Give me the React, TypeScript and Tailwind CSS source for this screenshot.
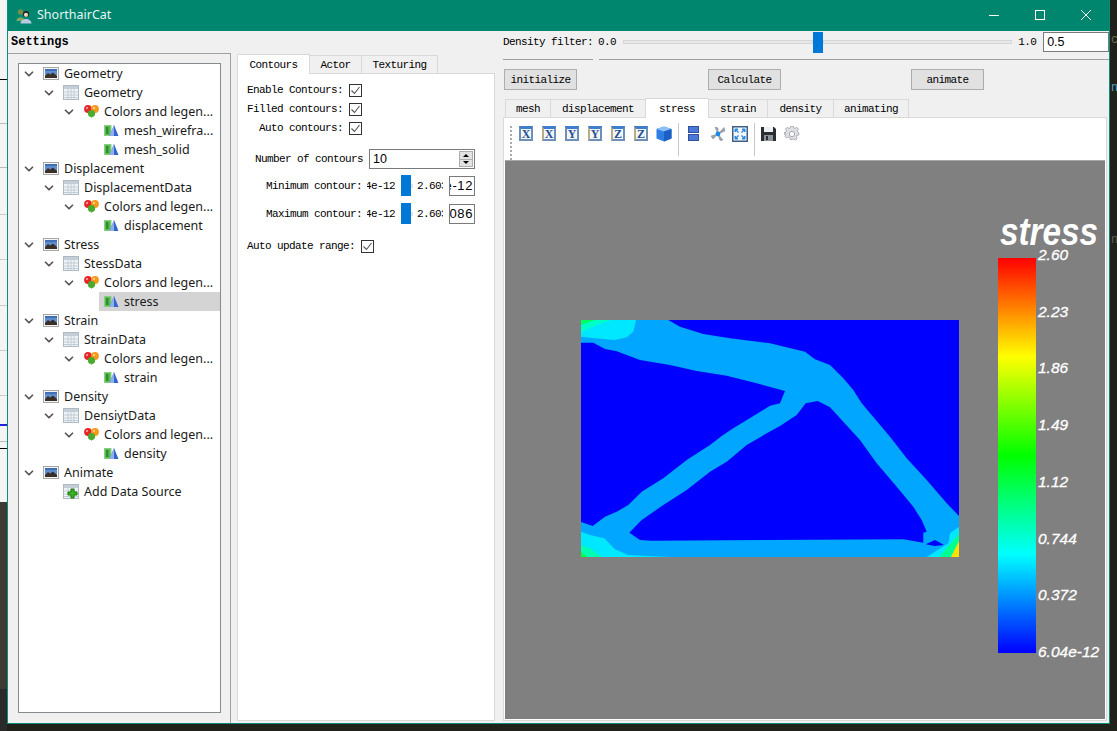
import { ReactNode } from "react";
import { ChevronDown } from "lucide-react";

const mono = "font-['Liberation_Mono',monospace] text-[11px] tracking-[-0.6px] text-black whitespace-pre";
const sans = "font-['Noto_Sans',sans-serif] text-[12.5px] text-[#1a1a1a] whitespace-pre";

const ImageIcon = () => (
  <svg width="16" height="13" viewBox="0 0 16 13">
    <rect x="0.5" y="0.5" width="15" height="12" fill="#f4f4f4" stroke="#a8a8a8" />
    <rect x="2" y="2" width="12" height="9" fill="#5f8fd0" />
    <path d="M2 9 L5 6 L7 7.5 L10 5.5 L14 9 V11 H2 Z" fill="#3a3028" />
    <rect x="2" y="2" width="12" height="2" fill="#3f6fb5" />
  </svg>
);

const TableIcon = ({ plus }: { plus?: boolean }) => (
  <svg width="16" height="15" viewBox="0 0 16 15">
    <rect x="0.5" y="0.5" width="15" height="14" fill="#f2f5f8" stroke="#aeb9c4" />
    <rect x="1" y="1" width="14" height="3" fill="#c3ced9" />
    <path d="M1 7h14M1 10h14M1 12.5h14M5 4v10M8 4v10M11 4v10" stroke="#c2ccd6" strokeWidth="1" />
    {plus && <path d="M8 5h3v3h3v3h-3v3H8v-3H5V8h3Z" fill="#37b41e" stroke="#1d7a0e" strokeWidth="1" />}
  </svg>
);

const ColorsIcon = () => (
  <svg width="15" height="13" viewBox="0 0 15 13">
    <path d="M3.5 6 L7.5 13 L11.5 6 Z" fill="#4bab2e" />
    <circle cx="4" cy="4" r="3.9" fill="#e3272b" />
    <circle cx="11" cy="4" r="3.9" fill="#f39a1c" />
    <circle cx="7.5" cy="8.5" r="3.6" fill="#4bab2e" />
    <circle cx="3" cy="3" r="1" fill="#ffb0b0" />
    <circle cx="10" cy="3" r="1" fill="#ffe0a0" />
  </svg>
);

const MeshIcon = () => (
  <svg width="15" height="13" viewBox="0 0 15 13">
    <rect x="0.5" y="1.5" width="6.5" height="10" fill="#5dbb57" stroke="#86d080" />
    <rect x="2" y="3" width="2.5" height="7" fill="#2c8f32" />
    <path d="M10 1 L14.5 12 H5.5 Z" fill="#3565cc" />
    <path d="M10 1 L10 12 H5.5 Z" fill="#8fb0ee" />
  </svg>
);

type Row = { level: number; label: string; icon: ReactNode; open?: boolean; selected?: boolean };

const section = (title: string, data: string, leaves: string[], selected?: string): Row[] => [
  { level: 0, label: title, icon: <ImageIcon />, open: true },
  { level: 1, label: data, icon: <TableIcon />, open: true },
  { level: 2, label: "Colors and legen...", icon: <ColorsIcon />, open: true },
  ...leaves.map((l) => ({ level: 3, label: l, icon: <MeshIcon />, selected: l === selected })),
];

const treeRows: Row[] = [
  ...section("Geometry", "Geometry", ["mesh_wirefra...", "mesh_solid"]),
  ...section("Displacement", "DisplacementData", ["displacement"]),
  ...section("Stress", "StessData", ["stress"], "stress"),
  ...section("Strain", "StrainData", ["strain"]),
  ...section("Density", "DensiytData", ["density"]),
  { level: 0, label: "Animate", icon: <ImageIcon />, open: true },
  { level: 1, label: "Add Data Source", icon: <TableIcon plus /> },
];

const TreeRow = ({ row }: { row: Row }) => (
  <div className="flex h-[19px] items-center" style={{ paddingLeft: row.level * 20 }}>
    <div className="flex w-5 shrink-0 justify-center">
      {row.open && <ChevronDown size={14} strokeWidth={3} className="text-[#555]" />}
    </div>
    <div className={`flex h-full flex-1 items-center pl-1 ${row.selected ? "bg-[#d4d4d4]" : ""}`}>
      <div className="flex w-[16px] shrink-0 justify-center">{row.icon}</div>
      <span className={`ml-[5px] pt-[2px] ${sans}`}>{row.label}</span>
    </div>
  </div>
);

const CheckBox = () => (
  <div className="flex h-[13px] w-[13px] shrink-0 items-center justify-center border border-[#333] bg-white">
    <svg width="11" height="11" viewBox="0 0 11 11">
      <path d="M1.5 5.5 L4.5 8.5 L9.5 2" fill="none" stroke="#555" strokeWidth="1.1" />
    </svg>
  </div>
);

const CheckRow = ({ label, width }: { label: string; width: string }) => (
  <div className="flex h-[19px] items-center">
    <div className={`${width} text-right ${mono}`}>{label}</div>
    <div className="ml-[6px]">
      <CheckBox />
    </div>
  </div>
);

const RangeRow = ({ label, value, className }: { label: string; value: string; className: string }) => (
  <div className={`flex h-[20px] items-center ${className}`}>
    <div className={`w-[124px] pt-px text-right ${mono}`}>{label}</div>
    <div className={`ml-[5px] flex w-[28px] justify-end overflow-hidden pt-px ${mono}`}>6.04e-12</div>
    <div className="ml-[6px] -mt-px h-[21px] w-[10px] shrink-0 bg-[#0078d7]" />
    <div className="h-[4px] w-[2px] shrink-0 bg-[#e2e2e2]" />
    <div className={`ml-[4px] w-[26px] overflow-hidden pt-px ${mono}`}>2.60386</div>
    <div className="ml-[6px] flex h-[20px] w-[26px] items-center justify-end overflow-hidden whitespace-nowrap border border-[#7a7a7a] bg-white px-[1px]">
      <span className="font-['Liberation_Sans',sans-serif] text-[13px] tracking-[0.6px] text-black">{value}</span>
    </div>
  </div>
);

const Tab = ({ label, width, active }: { label: string; width: string; active?: boolean }) => (
  <div
    className={`flex items-center justify-center border border-b-0 border-[#d9d9d9] pt-px ${width} ${mono} ${
      active ? "z-10 -mb-px h-[20px] bg-white" : "mt-[2px] h-[18px] bg-[#f0f0f0]"
    }`}
  >
    {label}
  </div>
);

const PushButton = ({ label, className }: { label: string; className: string }) => (
  <div className={`flex h-[21px] w-[73px] items-center justify-center border border-[#adadad] bg-[#e1e1e1] pt-px ${mono} ${className}`}>
    {label}
  </div>
);

const ViewIcon = ({ letter, tan }: { letter: string; tan?: boolean }) => (
  <div
    className={`flex h-[15px] w-[14px] shrink-0 items-center justify-center border-2 border-t-[3px] border-[#6f8fb8] border-t-[#3d7fcc] bg-[#f3f6fa] font-['Liberation_Serif',serif] text-[12px] font-bold leading-none text-[#25528f] ${
      tan ? "border-l-[#b9ab86]" : ""
    }`}
  >
    {letter}
  </div>
);

const CubeIcon = () => (
  <svg width="16" height="16" viewBox="0 0 16 16">
    <path d="M8 0.5 L15.5 3 V12.5 L8 15.5 L0.5 12.5 V3 Z" fill="#2d7fe6" />
    <path d="M8 0.5 L15.5 3 L8 5.5 L0.5 3 Z" fill="#8cc0f7" />
    <path d="M8 5.5 V15.5 L15.5 12.5 V3 Z" fill="#1d60c4" />
  </svg>
);

const SplitIcon = () => (
  <svg width="11" height="15" viewBox="0 0 11 15">
    <rect x="0.5" y="0.5" width="10" height="6" fill="#4b78d8" stroke="#2f4f99" />
    <rect x="0.5" y="8.5" width="10" height="6" fill="#4b78d8" stroke="#2f4f99" />
  </svg>
);

const AxesIcon = () => (
  <svg width="16" height="16" viewBox="0 0 16 16">
    <path d="M8 8 L14 1.5 L15 5 Z M8 8 L1 10 L3 13 Z M8 8 L13 14 L10 14.5 Z M8 8 L5 1 L8 2 Z" fill="#9aa3ad" stroke="#7c858f" strokeWidth="0.5" />
    <circle cx="8" cy="8" r="2.4" fill="#1e88e5" />
  </svg>
);

const FitIcon = () => (
  <svg width="16" height="16" viewBox="0 0 16 16">
    <rect x="0.75" y="0.75" width="14.5" height="14.5" fill="#f3f6fa" stroke="#3e5f86" strokeWidth="1.5" />
    <path d="M3 3 L6 3 L3 6 Z M13 3 L10 3 L13 6 Z M3 13 L6 13 L3 10 Z M13 13 L10 13 L13 10 Z" fill="#2b8ae0" stroke="#2b8ae0" />
    <path d="M4 4 L6.5 6.5 M12 4 L9.5 6.5 M4 12 L6.5 9.5 M12 12 L9.5 9.5" stroke="#2b8ae0" strokeWidth="1.4" />
  </svg>
);

const SaveIcon = () => (
  <svg width="15" height="15" viewBox="0 0 15 15">
    <path d="M0 1 H13 L15 3 V15 H0 Z" fill="#2a2d33" />
    <rect x="3" y="1" width="9" height="5" fill="#eef1f4" />
    <rect x="3" y="9" width="9" height="6" fill="#8e949c" />
    <rect x="5" y="10" width="2" height="4" fill="#2a2d33" />
  </svg>
);

const GearIcon = () => (
  <svg width="16" height="16" viewBox="0 0 24 24">
    <path
      d="M10 1h4l.7 3.2 2.2.9 2.8-1.8 2.8 2.8-1.8 2.8.9 2.2L23 11.8v4l-3.4.7-.9 2.1 1.8 2.8-2.8 2.6-2.8-1.8-2.2.9-.7 0H9l-.7-3.2-2.2-.9-2.8 1.8-2.8-2.8 1.8-2.8-.9-2.2L-1 15.8v-4l3.2-.7.9-2.2-1.8-2.8 2.8-2.8 2.8 1.8 2.2-.9Z"
      transform="translate(1 -1) scale(0.92)"
      fill="#dfe1e4"
      stroke="#a5a8ad"
      strokeWidth="1.5"
    />
    <circle cx="12" cy="12" r="4" fill="#fff" stroke="#a5a8ad" strokeWidth="1.5" />
  </svg>
);

const StressMesh = () => (
  <svg width="378" height="237" viewBox="0 0 378 237" className="block">
    <rect width="378" height="237" fill="#00a6ff" />
    <g fill="#0000ff">
      <polygon points="0,22.7 12.3,22.7 24,29 35.7,31.3 59,40 89,45 115.7,51 145.7,55.7 175.7,63.3 204,71 199,83.3 189,85.7 174,95 152.3,108.3 140.7,116 129,125 105.7,140 82.3,158.3 60.7,171.7 47.3,185 35.7,191.7 24,196.7 11.7,206 0,202" />
      <polygon points="87.3,0 99,6.7 122.3,14 149,18.3 189,23.3 224,31.7 234,39.3 249,45 262.3,58.3 272.3,70 280.7,83.3 309,116.7 325.7,138.3 345.7,160 365.7,183.3 378,196 378,0" />
      <polygon points="48.3,212.7 59,220 70.7,220.7 322.3,219.3 342.3,222.7 342.3,212.7 345.7,211.7 340.7,200 332.3,186.7 315.7,166.7 295.7,143.3 279,120 249,87.3 236.7,81 224.7,83.3 215.7,95 199,106 185.7,113.3 165.7,125 145.7,141.7 129,151.7 105.7,170 82.3,185 60.7,200" />
      <polygon points="344.7,224.3 354,220 363,225 354,226" />
    </g>
    <polygon points="0,0 55,0 52.3,11.7 45.7,17.3 34,20 14,18.3 0,16.7" fill="#00e8ff" />
    <polygon points="0,0 30,0 14,6 0,12" fill="#00ffc8" />
    <polygon points="0,0 14,0 0,5" fill="#00ff60" />
    <polygon points="0,211.7 9,215 23.3,218.3 34,229.3 47.3,235 89,237 0,237" fill="#00e8ff" />
    <polygon points="0,225 9,228.3 20.7,237 0,237" fill="#00ffb0" />
    <polygon points="0,231.7 5.7,237 0,237" fill="#00ff40" />
    <polygon points="378,206.7 369,213.3 367.3,223.3 345.7,237 378,237" fill="#00e8ff" />
    <polygon points="378,214 358,237 378,237" fill="#00ff90" />
    <polygon points="378,221 370,237 378,237" fill="#ffe000" />
  </svg>
);

const legend = ["2.60", "2.23", "1.86", "1.49", "1.12", "0.744", "0.372", "6.04e-12"];

const WindowButtons = () => (
  <div className="flex items-center text-white">
    <svg width="46" height="31" viewBox="0 0 46 31">
      <path d="M18 15.5 H28" stroke="#fff" />
    </svg>
    <svg width="46" height="31" viewBox="0 0 46 31">
      <rect x="18.5" y="10.5" width="9" height="9" fill="none" stroke="#fff" />
    </svg>
    <svg width="46" height="31" viewBox="0 0 46 31">
      <path d="M18 10 L28 20 M28 10 L18 20" stroke="#fff" />
    </svg>
  </div>
);

export default function App() {
  return (
    <div className="flex h-[731px] w-[1117px] overflow-hidden bg-[#21211c]">
      {/* whatever is behind the window on the left */}
      <div className="flex h-full w-[7px] shrink-0 flex-col bg-[#f4f4f4]">
        <div className="h-[80px] border-b border-black" />
        <div className="h-[44px] border-b border-[#bbb]" />
        <div className="h-[44px] border-b border-[#bbb]" />
        <div className="h-[47px] border-b border-[#ccc]" />
        <div className="h-[45px] border-b border-[#ccc]" />
        <div className="h-[46px] border-b border-[#ccc]" />
        <div className="h-[45px] border-b border-[#ccc]" />
        <div className="h-[45px] border-b border-[#ccc]" />
        <div className="h-[30px] border-b-2 border-[#2222dd]" />
        <div className="h-[16px] border-b border-[#bbb]" />
        <div className="h-[7px] border-b border-black" />
        <div className="h-[53px]" />
        <div className="h-[187px] bg-[#3e3b34]" />
        <div className="flex-1 bg-[#2a2a2a]" />
      </div>

      <div className="flex h-[724px] w-[1103px] shrink-0 flex-col border-x border-b border-[#0e8c7a] bg-[#f0f0f0]">
        <div className="flex h-[31px] shrink-0 items-center justify-between bg-[#00856f]">
          <div className="flex items-center">
            <svg width="16" height="16" viewBox="0 0 16 16" className="ml-[8px]">
              <circle cx="4.5" cy="4" r="2.8" fill="#6f8f4a" />
              <path d="M0.5 13 C0.5 8 8.5 8 8.5 13 Z" fill="#80a860" />
              <circle cx="10" cy="6" r="3" fill="#20201e" />
              <circle cx="10" cy="6.8" r="2.1" fill="#f3d8bd" />
              <path d="M4.5 15.5 C4.5 9.5 15.5 9.5 15.5 15.5 Z" fill="#b9c9de" />
            </svg>
            <span className="ml-[5px] font-['Noto_Sans',sans-serif] text-[12.5px] text-[#e6f5f1]">ShorthairCat</span>
          </div>
          <WindowButtons />
        </div>

        <div className="flex min-h-0 flex-1">
          {/* settings tree */}
          <div className="flex w-[223px] shrink-0 flex-col">
            <div className="flex h-[22px] shrink-0 items-center pl-[3px] font-['Liberation_Mono',monospace] text-[12px] font-bold text-black">
              Settings
            </div>
            <div className="flex min-h-0 flex-1 border-r border-t border-[#a0a0a0] pb-[10px] pl-[10px] pr-[9px] pt-[9px]">
              <div className="w-full border border-[#868a91] bg-white">
                {treeRows.map((row, i) => (
                  <TreeRow key={i} row={row} />
                ))}
              </div>
            </div>
          </div>

          {/* contours panel */}
          <div className="ml-[6px] flex w-[258px] shrink-0 flex-col pb-[2px] pt-[22px]">
            <div className="flex shrink-0 items-end">
              <Tab label="Contours" width="w-[73px]" active />
              <Tab label="Actor" width="w-[53px] -ml-px" />
              <Tab label="Texturing" width="w-[77px] -ml-px" />
            </div>
            <div className="flex-1 border border-[#d9d9d9] bg-white pt-[7px]">
              <CheckRow label="Enable Contours:" width="w-[105px]" />
              <CheckRow label="Filled contours:" width="w-[105px]" />
              <CheckRow label="Auto contours:" width="w-[105px]" />
              <div className="mt-[11px] flex h-[20px] items-center">
                <div className={`w-[125px] text-right ${mono}`}>Number of contours</div>
                <div className="ml-[6px] flex h-[20px] w-[106px] items-center justify-between border border-[#7a7a7a] bg-white pl-[3px] pr-[1px]">
                  <span className="font-['Liberation_Sans',sans-serif] text-[12.5px] text-black">10</span>
                  <div className="flex h-[16px] w-[14px] flex-col border border-[#adadad] bg-[#e1e1e1]">
                    <div className="flex flex-1 items-center justify-center border-b border-[#adadad] text-[0px]">
                      <div className="h-0 w-0 border-x-[3px] border-b-[3px] border-x-transparent border-b-black" />
                    </div>
                    <div className="flex flex-1 items-center justify-center">
                      <div className="h-0 w-0 border-x-[3px] border-t-[3px] border-x-transparent border-t-black" />
                    </div>
                  </div>
                </div>
              </div>
              <RangeRow label="Minimum contour:" value="6.04e-12" className="mt-[7px]" />
              <RangeRow label="Maximum contour:" value="2.60386086" className="mt-[8px]" />
              <div className="mt-[13px]">
                <CheckRow label="Auto update range:" width="w-[117px]" />
              </div>
            </div>
          </div>

          {/* main area */}
          <div className="ml-[8px] flex w-[606px] shrink-0 flex-col">
            <div className="flex h-[28px] shrink-0 items-center pb-[6px]">
              <span className={mono}>Density filter:</span>
              <span className={`ml-[5px] ${mono}`}>0.0</span>
              <div className="ml-[7px] flex w-[390px] items-center">
                <div className="h-[4px] w-[190px] border border-[#d6d6d6] bg-[#e8e8e8]" />
                <div className="h-[21px] w-[10px] shrink-0 bg-[#0078d7]" />
                <div className="h-[4px] flex-1 border border-[#d6d6d6] bg-[#e8e8e8]" />
              </div>
              <span className={`ml-[6px] ${mono}`}>1.0</span>
              <div className="ml-[7px] flex h-[20px] w-[66px] items-center border border-[#7a7a7a] bg-white pl-[3px]">
                <span className="font-['Liberation_Sans',sans-serif] text-[12.5px] text-black">0.5</span>
              </div>
            </div>
            <div className="flex h-[2px] shrink-0 gap-[6px]">
              <div className="h-px w-[90px] bg-[#a0a0a0]" />
              <div className="h-px flex-1 bg-[#a0a0a0]" />
            </div>
            <div className="mt-[8px] flex shrink-0 pl-px">
              <PushButton label="initialize" className="" />
              <PushButton label="Calculate" className="ml-[131px]" />
              <PushButton label="animate" className="ml-[130px]" />
            </div>
            <div className="mt-[7px] flex shrink-0 items-end pl-[2px]">
              <Tab label="mesh" width="w-[46px]" />
              <Tab label="displacement" width="w-[96px] -ml-px" />
              <Tab label="stress" width="w-[64px] -ml-px" active />
              <Tab label="strain" width="w-[60px] -ml-px" />
              <Tab label="density" width="w-[67px] -ml-px" />
              <Tab label="animating" width="w-[76px] -ml-px" />
            </div>
            <div className="mb-[2px] flex min-h-0 w-[604px] flex-1 flex-col border border-[#d9d9d9] bg-white px-px pb-px">
              <div className="flex h-[42px] shrink-0 items-start pt-[8px]">
                <div className="ml-[5px] h-[34px] w-[2px] border-l-2 border-dotted border-[#aaa]" />
                <div className="ml-[7px] flex items-center gap-[9px]">
                  <ViewIcon letter="X" />
                  <ViewIcon letter="X" tan />
                  <ViewIcon letter="Y" />
                  <ViewIcon letter="Y" tan />
                  <ViewIcon letter="Z" tan />
                  <ViewIcon letter="Z" tan />
                </div>
                <div className="ml-[8px]">
                  <CubeIcon />
                </div>
                <div className="-mt-[3px] ml-[6px] h-[33px] w-px bg-[#c8c8c8]" />
                <div className="ml-[9px]">
                  <SplitIcon />
                </div>
                <div className="ml-[11px]">
                  <AxesIcon />
                </div>
                <div className="ml-[6px]">
                  <FitIcon />
                </div>
                <div className="-mt-[3px] ml-[6px] h-[33px] w-px bg-[#c8c8c8]" />
                <div className="ml-[6px]">
                  <SaveIcon />
                </div>
                <div className="ml-[8px]">
                  <GearIcon />
                </div>
              </div>
              <div className="relative min-h-0 flex-1 border-t border-[#a8a8a8] bg-[#808080]">
                <div className="absolute left-[76px] top-[159px]">
                  <StressMesh />
                </div>
                <div className="absolute left-[495px] top-[52px] origin-left scale-x-[0.875] font-['Liberation_Sans',sans-serif] text-[38px] font-bold italic leading-none text-white">
                  stress
                </div>
                <div className="absolute left-[493px] top-[97px] h-[395px] w-[38px] bg-[linear-gradient(to_bottom,#ff0000,#ffff00_25%,#00ff00_50%,#00ffff_75%,#0000ff)]" />
                <div className="absolute left-[533px] top-[85px] flex h-[415px] flex-col justify-between font-['Liberation_Sans',sans-serif] text-[15.5px] italic leading-[18px] text-white [-webkit-text-stroke:0.3px_white]">
                  {legend.map((v) => (
                    <span key={v}>{v}</span>
                  ))}
                </div>
              </div>
            </div>
          </div>
        </div>
      </div>

      {/* code editor peeking out on the right */}
      <div className="flex h-full flex-1 flex-col overflow-hidden pl-[1px] font-['Liberation_Mono',monospace] text-[12px] leading-[14px]">
        <span className="mt-[33px] text-[#6e6e52]">c</span>
        <span className="mt-[34px] text-[#4fa3c7]">n</span>
        <span className="mt-[138px] text-[#5e5e52]">n</span>
      </div>
    </div>
  );
}
